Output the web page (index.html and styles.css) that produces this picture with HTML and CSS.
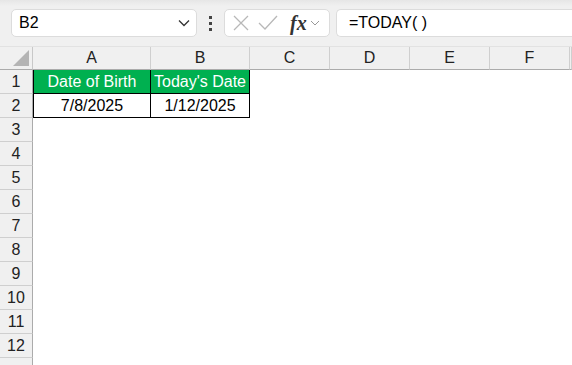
FILE: index.html
```html
<!DOCTYPE html>
<html lang="en">

<head>
    <meta charset="UTF-8">
    <meta name="viewport" content="width=device-width, initial-scale=1.0">
    <title>TODAY function</title>
    <link rel="stylesheet" href="styles.css">
</head>

<body>

    <div class="toolbar">
        <div class="name-box">
            <span>B2</span>
            <svg width="12" height="8" viewBox="0 0 12 8"><path d="M1 1.5 L6 6.5 L11 1.5" fill="none" stroke="#333" stroke-width="1.3"/></svg>
        </div>
        <div class="dots"><i></i><i></i><i></i></div>
        <div class="fn-box">
            <svg width="18" height="18" viewBox="0 0 18 18"><path d="M2 2 L16 16 M16 2 L2 16" stroke="#b8b8b8" stroke-width="1.3"/></svg>
            <svg width="20" height="16" viewBox="0 0 20 16"><path d="M1 8 L7 14 L19 1" fill="none" stroke="#b8b8b8" stroke-width="1.3"/></svg>
            <span class="fx">fx</span>
            <svg width="10" height="6" viewBox="0 0 10 6"><path d="M1 1 L5 5 L9 1" fill="none" stroke="#999" stroke-width="1"/></svg>
        </div>
        <div class="formula">=TODAY( )</div>
    </div>

    <div class="sheet">
        <div class="corner"><span class="tri"></span></div>
        <div class="col-head">A</div>
        <div class="col-head">B</div>
        <div class="col-head">C</div>
        <div class="col-head">D</div>
        <div class="col-head">E</div>
        <div class="col-head">F</div>
        <div class="col-head"></div>

        <div class="row-head">1</div>
        <div class="cell title">Date of Birth</div>
        <div class="cell title">Today's Date</div>
        <div class="cell"></div><div class="cell"></div><div class="cell"></div><div class="cell"></div><div class="cell"></div>

        <div class="row-head">2</div>
        <div class="cell data">7/8/2025</div>
        <div class="cell data">1/12/2025</div>
        <div class="cell"></div><div class="cell"></div><div class="cell"></div><div class="cell"></div><div class="cell"></div>

        <div class="row-head">3</div><div class="cell blank"></div>
        <div class="row-head">4</div><div class="cell blank"></div>
        <div class="row-head">5</div><div class="cell blank"></div>
        <div class="row-head">6</div><div class="cell blank"></div>
        <div class="row-head">7</div><div class="cell blank"></div>
        <div class="row-head">8</div><div class="cell blank"></div>
        <div class="row-head">9</div><div class="cell blank"></div>
        <div class="row-head">10</div><div class="cell blank"></div>
        <div class="row-head">11</div><div class="cell blank"></div>
        <div class="row-head">12</div><div class="cell blank"></div>
        <div class="row-head"></div><div class="cell blank"></div>
    </div>

</body>

</html>
```

FILE: styles.css
```css
body {
    margin: 0;
    padding: 0;
    width: 572px;
    height: 365px;
    overflow: hidden;
    background: #ffffff;
    font-family: "Liberation Sans", Arial, sans-serif;
    color: #000;
}

.toolbar {
    height: 47px;
    background: linear-gradient(#e6e6e6 0, #f0f0f0 6px, #f0f0f0 100%);
    display: flex;
    align-items: center;
    padding-left: 11px;
    box-sizing: border-box;
    border-bottom: 1px solid #e2e2e2;
}

.name-box {
    width: 186px;
    height: 28px;
    box-sizing: border-box;
    background: #fff;
    border: 1px solid #dcdcdc;
    border-radius: 5px;
    display: flex;
    align-items: center;
    justify-content: space-between;
    padding: 0 6px 0 7px;
    font-size: 16px;
}

.dots {
    width: 27px;
    display: flex;
    flex-direction: column;
    align-items: center;
    gap: 3px;
}

.dots i {
    width: 3px;
    height: 3px;
    background: #444;
}

.fn-box {
    width: 106px;
    height: 28px;
    box-sizing: border-box;
    background: #fff;
    border: 1px solid #dcdcdc;
    border-radius: 5px;
    display: flex;
    align-items: center;
    padding-left: 7px;
    gap: 8px;
}

.fn-box .fx {
    font-family: "Liberation Serif", serif;
    font-style: italic;
    font-weight: bold;
    font-size: 20px;
    color: #333;
    margin-left: 4px;
    margin-right: -5px;
}

.formula {
    flex: 1;
    height: 28px;
    margin-left: 6px;
    box-sizing: border-box;
    background: #fff;
    border: 1px solid #dcdcdc;
    border-right: none;
    border-radius: 5px 0 0 5px;
    display: flex;
    align-items: center;
    padding-left: 12px;
    font-size: 16px;
}

.sheet {
    display: grid;
    grid-template-columns: 33px 118px 99px 80px 80px 80px 80px 2px;
    grid-template-rows: 23px repeat(13, 24px);
    font-size: 16px;
}

.corner,
.col-head,
.row-head {
    background: #f0f0f0;
    box-sizing: border-box;
    display: flex;
    align-items: center;
    justify-content: center;
    color: #222;
}

.corner {
    border-right: 1px solid #c8c8c8;
    border-bottom: 1px solid #ababab;
    position: relative;
}

.tri {
    position: absolute;
    right: 3px;
    bottom: 3px;
    width: 0;
    height: 0;
    border-left: 16px solid transparent;
    border-bottom: 16px solid #b4b4b4;
}

.col-head {
    border-right: 1px solid #cfcfcf;
    border-bottom: 1px solid #ababab;
}

.row-head {
    border-right: 1px solid #ababab;
    border-bottom: 1px solid #cfcfcf;
}

.cell {
    box-sizing: border-box;
    display: flex;
    align-items: center;
    justify-content: center;
}

.cell.blank {
    grid-column: span 7;
}

.title {
    background: #00b050;
    color: #fff;
    border: 1px solid #000;
    border-top: none;
}

.title + .title {
    border-left: none;
}

.data {
    border: 1px solid #000;
    border-top: none;
}

.data + .data {
    border-left: none;
}
```
